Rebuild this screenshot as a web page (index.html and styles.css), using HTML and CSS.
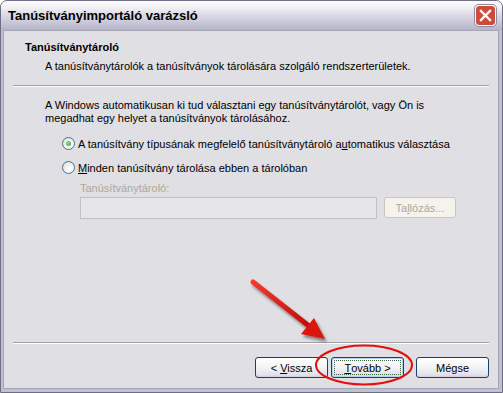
FILE: index.html
```html
<!DOCTYPE html>
<html lang="hu">
<head>
    <meta charset="UTF-8">
    <title>Tanúsítványimportáló varázsló</title>
    <link rel="stylesheet" href="styles.css">
</head>
<body>
    <div class="window">
        <!-- Title bar -->
        <div class="titlebar">
            <span class="title">Tanúsítványimportáló varázsló</span>
            <div class="close">
                <svg width="19" height="19" viewBox="0 0 19 19">
                    <rect x="0" y="0" width="19" height="19" rx="3" fill="#cf4a3a"/>
                    <path d="M5 5 L14 14 M14 5 L5 14" stroke="#fff" stroke-width="2.4" stroke-linecap="square"/>
                </svg>
            </div>
        </div>

        <div class="client">
            <!-- Wizard header -->
            <div class="header">
                <div class="header-title">Tanúsítványtároló</div>
                <div class="header-sub">A tanúsítványtárolók a tanúsítványok tárolására szolgáló rendszerterületek.</div>
            </div>
            <div class="sep"></div>

            <!-- Page body -->
            <div class="body">
                <p class="intro">A Windows automatikusan ki tud választani egy tanúsítványtárolót, vagy Ön is megadhat egy helyet a tanúsítványok tárolásához.</p>
                <label class="radio">
                    <span class="dot checked"></span>
                    <span>A tanúsítvány típusának megfelelő tanúsítványtároló a<u>u</u>tomatikus választása</span>
                </label>
                <label class="radio">
                    <span class="dot"></span>
                    <span><u>M</u>inden tanúsítvány tárolása ebben a tárolóban</span>
                </label>
                <div class="store">
                    <div class="store-label">Tanúsítványtároló:</div>
                    <div class="store-row">
                        <div class="store-input"></div>
                        <button class="btn disabled">Ta<u>l</u>lózás...</button>
                    </div>
                </div>
            </div>

            <div class="sep"></div>
            <div class="buttons">
                <button class="btn">&lt; <u>V</u>issza</button>
                <button class="btn focused"><span class="focus"><u>T</u>ovább &gt;</span></button>
                <button class="btn cancel">Mégse</button>
            </div>
        </div>

        <!-- Annotation drawn over the dialog -->
        <svg class="annotation" width="503" height="393" viewBox="0 0 503 393">
            <defs>
                <filter id="shadow" x="-20%" y="-20%" width="140%" height="140%">
                    <feGaussianBlur in="SourceAlpha" stdDeviation="1.5"/>
                    <feOffset dx="2" dy="3" result="b"/>
                    <feComponentTransfer><feFuncA type="linear" slope="0.45"/></feComponentTransfer>
                    <feMerge><feMergeNode/><feMergeNode in="SourceGraphic"/></feMerge>
                </filter>
                <linearGradient id="arrowFill" x1="0" y1="0" x2="1" y2="1">
                    <stop offset="0" stop-color="#f03a2e"/>
                    <stop offset="1" stop-color="#c40d08"/>
                </linearGradient>
            </defs>
            <g filter="url(#shadow)">
                <path d="M253 282 L309 326" stroke="url(#arrowFill)" stroke-width="5" stroke-linecap="round"/>
                <path d="M325 339 L301 334 L314 318 Z" fill="#d81510"/>
            </g>
            <ellipse cx="364" cy="365" rx="48" ry="19.5" fill="none" stroke="#e01010" stroke-width="2"/>
        </svg>
    </div>
</body>
</html>
```

FILE: styles.css
```css
body {
    margin: 0;
    background: #fff;
    font-family: 'Liberation Sans', 'DejaVu Sans', Arial, sans-serif;
    font-size: 11px;
    color: #000;
}
.window {
    position: relative;
    width: 503px;
    height: 393px;
    box-sizing: border-box;
    display: flex;
    flex-direction: column;
    background: #c0c0d0;
    border: 1px solid #6e6d85;
    border-radius: 7px 7px 0 0;
    overflow: hidden;
}
.titlebar {
    height: 29px;
    display: flex;
    align-items: center;
    justify-content: space-between;
    padding: 0 6px 0 7px;
    background: linear-gradient(#fdfdfe 0%, #eeeef4 25%, #d6d5e2 55%, #c4c3d4 80%, #b6b5c8 100%);
}
.title {
    font-family: 'Liberation Sans', Arial, sans-serif;
    font-size: 13px;
    font-weight: bold;
    color: #000;
}
.close {
    width: 19px;
    height: 19px;
    border: 1px solid #fff;
    border-radius: 4px;
    overflow: hidden;
    box-shadow: 0 0 0 1px #8a8aa0;
}
.close svg {
    display: block;
}
.client {
    flex: 1;
    display: flex;
    flex-direction: column;
    margin: 0 3px 3px 2px;
    background: #e0dfe3;
    border: 1px solid #a5a4b8;
}
.header {
    height: 54px;
    padding: 10px 0 0 21px;
    box-sizing: border-box;
}
.header-title {
    font-weight: bold;
}
.header-sub {
    margin: 7px 0 0 20px;
}
.sep {
    margin: 0 9px;
    border-top: 1px solid #a0a0a8;
    border-bottom: 1px solid #fff;
}
.body {
    flex: 1;
    padding: 12px 0 0 41px;
}
.intro {
    margin: 0;
    width: 390px;
    line-height: 13px;
}
.radio {
    display: flex;
    align-items: center;
    gap: 3px;
    margin: 12px 0 0 17px;
    height: 13px;
}
.radio + .radio {
    margin-top: 11px;
}
.dot {
    width: 11px;
    height: 11px;
    border: 1px solid #4a6f92;
    border-radius: 50%;
    background: radial-gradient(circle at 65% 65%, #fff 0%, #f3f3f3 40%, #d8d8d4 100%);
    display: flex;
    align-items: center;
    justify-content: center;
}
.dot.checked::after {
    content: '';
    width: 5px;
    height: 5px;
    border-radius: 50%;
    background: radial-gradient(circle at 40% 40%, #8ee68e, #21a121);
}
.store {
    margin: 8px 0 0 35px;
    color: #aca899;
}
.store-row {
    display: flex;
    gap: 7px;
    margin-top: 3px;
}
.store-input {
    width: 295px;
    height: 20px;
    border: 1px solid #c4c2b7;
    background: #e6e5e9;
}
.btn {
    width: 73px;
    height: 21px;
    padding: 0;
    font-family: inherit;
    font-size: 11px;
    color: #000;
    border: 1px solid #1c3f6e;
    border-radius: 3px;
    background: linear-gradient(#ffffff, #f3f3f6 50%, #e1e0e8 90%, #d0cfd9);
}
.btn.disabled {
    width: 72px;
    color: #aca899;
    border-color: #c9c7ba;
    background: #f4f3ee;
}
.buttons {
    display: flex;
    justify-content: flex-end;
    gap: 3px;
    padding: 13px 9px 10px 0;
}
.btn.cancel {
    margin-left: 9px;
}
.btn.focused {
    padding: 2px;
    box-shadow: inset 0 0 0 1px #b9d1ea;
}
.focus {
    display: flex;
    align-items: center;
    justify-content: center;
    height: 100%;
    box-sizing: border-box;
    border: 1px dotted #3a6a3a;
}
.annotation {
    position: absolute;
    left: -1px;
    top: -1px;
    pointer-events: none;
}
```
